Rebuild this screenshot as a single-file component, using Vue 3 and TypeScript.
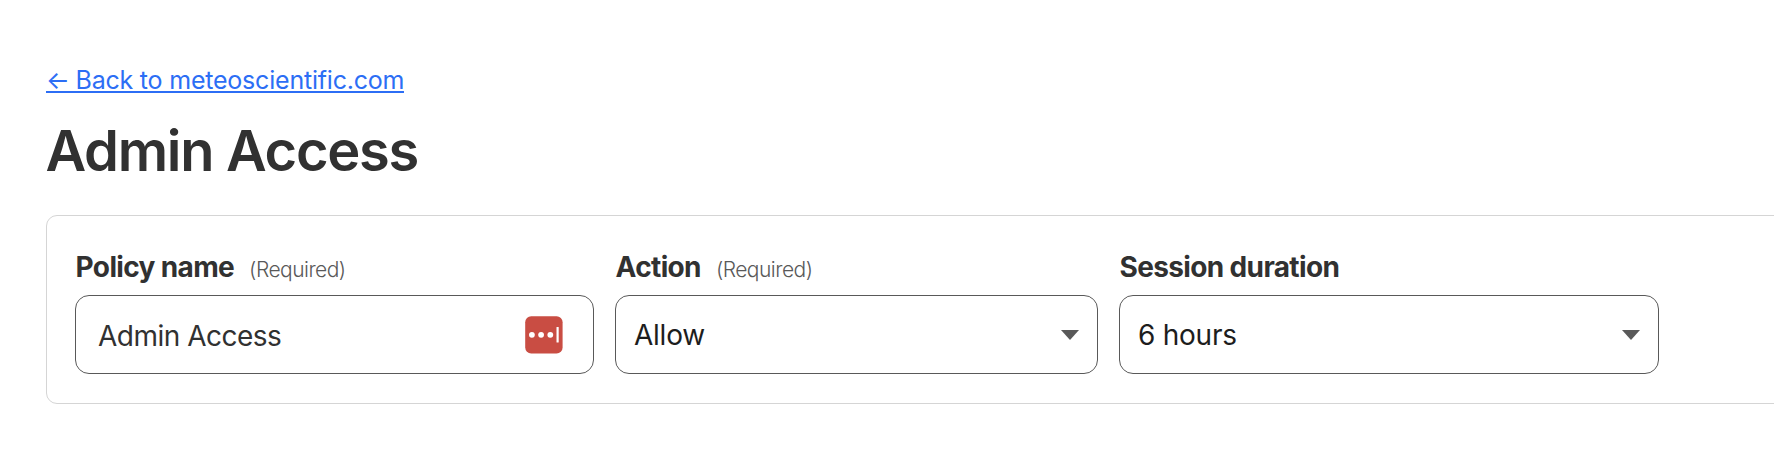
<script setup lang="ts">
interface Field {
  id: string
  label: string
  required: boolean
  value: string
  kind: 'text' | 'select'
}

const fields: Field[] = [
  { id: 'policy', label: 'Policy name', required: true, value: 'Admin Access', kind: 'text' },
  { id: 'action', label: 'Action', required: true, value: 'Allow', kind: 'select' },
  { id: 'session', label: 'Session duration', required: false, value: '6 hours', kind: 'select' },
]
</script>

<template>
  <main class="page">
    <a class="back"><span class="arrow">←</span> <span>Back to meteoscientific.com</span></a>
    <h1 class="title">Admin Access</h1>
    <section class="card">
      <div v-for="field in fields" :key="field.id" class="field" :class="field.id">
        <div class="caption">
          <span class="label">{{ field.label }}</span>
          <span v-if="field.required" class="required">(Required)</span>
        </div>
        <div class="control" :class="field.kind">
          <span class="value">{{ field.value }}</span>
          <svg v-if="field.kind === 'text'" class="filler" width="38" height="38" viewBox="0 0 38 38">
            <rect x="0.2" y="0.2" width="37.4" height="37.4" rx="6" fill="#c94d43" />
            <circle cx="6.9" cy="18.8" r="2.9" fill="#fff" />
            <circle cx="16.1" cy="18.8" r="2.9" fill="#fff" />
            <circle cx="25.3" cy="18.8" r="2.9" fill="#fff" />
            <rect x="31.5" y="11" width="2.2" height="15.6" rx="0.6" fill="#fff" />
          </svg>
          <svg v-else class="caret" width="18" height="10" viewBox="0 0 18 10">
            <path d="M0 0H18L9 10Z" fill="#595959" />
          </svg>
        </div>
      </div>
    </section>
  </main>
</template>

<style>
html,
body {
  background: #fff;
}

body {
  overflow: hidden;
}
</style>

<style scoped>
.page {
  box-sizing: border-box;
  height: 468px;
  padding: 64px 0 0 46px;
  overflow: hidden;
  font-family: Inter, 'Liberation Sans', sans-serif;
  color: #313131;
}

.back {
  display: block;
  width: max-content;
  height: 27px;
  line-height: 32px;
  font-size: 25px;
  letter-spacing: -0.21px;
  white-space: nowrap;
  color: #2c6ef5;
  border-bottom: 2px solid #2c6ef5;
}

.arrow {
  margin-right: -1px;
}

.title {
  margin: 24px 0 0;
  height: 68px;
  line-height: 68px;
  font-size: 56px;
  font-weight: 600;
  letter-spacing: -1.3px;
  text-indent: -0.5px;
  white-space: nowrap;
}

.card {
  box-sizing: border-box;
  display: flex;
  gap: 21px;
  width: 1800px;
  height: 189px;
  margin-top: 30px;
  padding: 33px 0 0 28px;
  border: 1px solid #d5d5d5;
  border-radius: 11px;
}

.policy {
  width: 519px;
}

.action {
  width: 483px;
}

.session {
  width: 540px;
}

.caption {
  display: flex;
  align-items: baseline;
  gap: 15px;
  height: 46px;
  line-height: 36px;
  padding-left: 0.6px;
  white-space: nowrap;
}

.label {
  font-size: 28px;
  font-weight: 700;
  letter-spacing: -0.65px;
}

.required {
  font-size: 21px;
  font-weight: 300;
  letter-spacing: -0.52px;
  color: #595959;
}

.control {
  box-sizing: border-box;
  display: flex;
  align-items: center;
  justify-content: space-between;
  height: 79px;
  border: 1px solid #595959;
  border-radius: 14px;
  font-size: 28px;
}

.text {
  padding: 2px 30px 0 22px;
  letter-spacing: -0.5px;
}

.filler {
  margin-top: -2px;
}

.select {
  padding: 0 18px;
  letter-spacing: -0.25px;
  color: #1d1d1d;
}
</style>
